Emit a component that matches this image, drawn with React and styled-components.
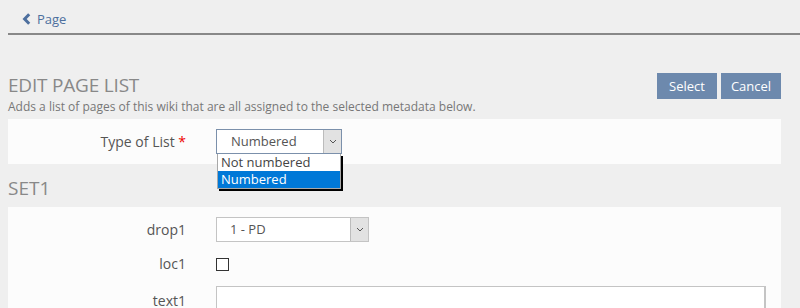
import styled, { createGlobalStyle } from 'styled-components';

const GlobalStyle = createGlobalStyle`
  html, body { margin: 0; padding: 0; background: #efefef; }
  body { font-family: 'Open Sans', 'Liberation Sans', sans-serif; color: #555; }
`;

const Page = styled.div` width: 800px; height: 308px; overflow: hidden; `;

const Breadcrumb = styled.div` margin-left: 8px; height: 35px; border-bottom: 2px solid #888; display: flex; align-items: center; padding-left: 14px; padding-top: 5px; box-sizing: border-box; `;
const BackLink = styled.a` display: flex; align-items: center; gap: 6px; color: #4d6f9e; font-size: 13px; text-decoration: none; cursor: pointer; `;

const Content = styled.div` padding: 0 19px 0 8px; `;

const HeaderRow = styled.div` display: flex; justify-content: space-between; align-items: flex-start; padding-top: 38px; height: 84px; box-sizing: border-box; `;
const Title = styled.h1` margin: 0; font-size: 19px; font-weight: 400; color: #888; line-height: 24px; text-transform: uppercase; letter-spacing: -0.2px; `;
const Description = styled.p` margin: 2px 0 0; font-size: 12px; color: #777; line-height: 16px; `;
const ButtonGroup = styled.div` display: flex; gap: 4px; `;
const ActionButton = styled.button` width: 60px; height: 26px; border: none; background: #6d89ad; color: #fff; font-family: inherit; font-size: 13px; cursor: pointer; padding: 0; `;

const Panel = styled.div` background: #fcfcfc; padding: 10px 15px 10px 0; display: grid; grid-template-columns: 178px 1fr; column-gap: 30px; align-items: center; `;
const SectionTitle = styled.h2` margin: 0; height: 43px; display: flex; align-items: center; padding-top: 4px; box-sizing: border-box; font-size: 19px; font-weight: 400; color: #888; `;

const Label = styled.label` text-align: right; font-size: 14px; color: #555; height: ${p => p.$h || 25}px; line-height: ${p => p.$h || 25}px; `;
const Required = styled.span` color: #e00; `;
const Field = styled.div` position: relative; height: ${p => p.$h || 25}px; display: flex; align-items: center; `;

const SelectBox = styled.div` width: ${p => p.$w}px; height: 25px; box-sizing: border-box; border: 1px solid ${p => (p.$open ? '#7b90ab' : '#c4c4c4')}; background: #fff; display: flex; align-items: stretch; `;
const SelectValue = styled.div` flex: 1; font-size: 13px; color: #555; padding-left: ${p => p.$pad}px; line-height: 23px; `;
const SelectArrow = styled.div` width: 17px; background: #e2e2e2; border-left: 1px solid #bcbcbc; display: flex; align-items: center; justify-content: center; `;

const OptionList = styled.ul` position: absolute; top: 25px; left: 1px; width: 124px; margin: 0; padding: 0; list-style: none; background: #fff; border: 1px solid #a8a8a8; border-top: none; box-shadow: 2px 2px 0 #000; box-sizing: border-box; z-index: 5; `;
const Option = styled.li` font-size: 13px; line-height: 17px; padding-left: 3px; color: ${p => (p.$active ? '#fff' : '#444')}; background: ${p => (p.$active ? '#0078d7' : '#fff')}; `;

const Checkbox = styled.span` width: 13px; height: 13px; box-sizing: border-box; border: 1px solid #333; background: #fff; `;
const TextInput = styled.div` width: 100%; height: 30px; box-sizing: border-box; border: 1px solid #c4c4c4; border-right-width: 2px; background: #fff; `;

const Arrow = () => (
  <svg width="8" height="5" viewBox="0 0 8 5"><path d="M1 1l3 3 3-3" fill="none" stroke="#555" strokeWidth="1" /></svg>
);

const Chevron = () => (
  <svg width="9" height="12" viewBox="0 0 9 12"><path d="M7.2 1.2L2.6 6l4.6 4.8" fill="none" stroke="#4d6f9e" strokeWidth="3" /></svg>
);

export default function App() {
  return (
    <Page>
      <GlobalStyle />
      <Breadcrumb>
        <BackLink><Chevron />Page</BackLink>
      </Breadcrumb>
      <Content>
        <HeaderRow>
          <div>
            <Title>Edit Page List</Title>
            <Description>Adds a list of pages of this wiki that are all assigned to the selected metadata below.</Description>
          </div>
          <ButtonGroup>
            <ActionButton>Select</ActionButton>
            <ActionButton>Cancel</ActionButton>
          </ButtonGroup>
        </HeaderRow>
        <Panel>
          <Label>Type of List <Required>*</Required></Label>
          <Field>
            <SelectBox $w={126} $open>
              <SelectValue $pad={14}>Numbered</SelectValue>
              <SelectArrow><Arrow /></SelectArrow>
            </SelectBox>
            <OptionList>
              <Option>Not numbered</Option>
              <Option $active>Numbered</Option>
            </OptionList>
          </Field>
        </Panel>
        <SectionTitle>SET1</SectionTitle>
        <Panel>
          <Label>drop1</Label>
          <Field>
            <SelectBox $w={153}>
              <SelectValue $pad={13}>1 - PD</SelectValue>
              <SelectArrow><Arrow /></SelectArrow>
            </SelectBox>
          </Field>
          <Label $h={44}>loc1</Label>
          <Field $h={44}><Checkbox /></Field>
          <Label $h={30}>text1</Label>
          <Field $h={30}><TextInput /></Field>
        </Panel>
      </Content>
    </Page>
  );
}
